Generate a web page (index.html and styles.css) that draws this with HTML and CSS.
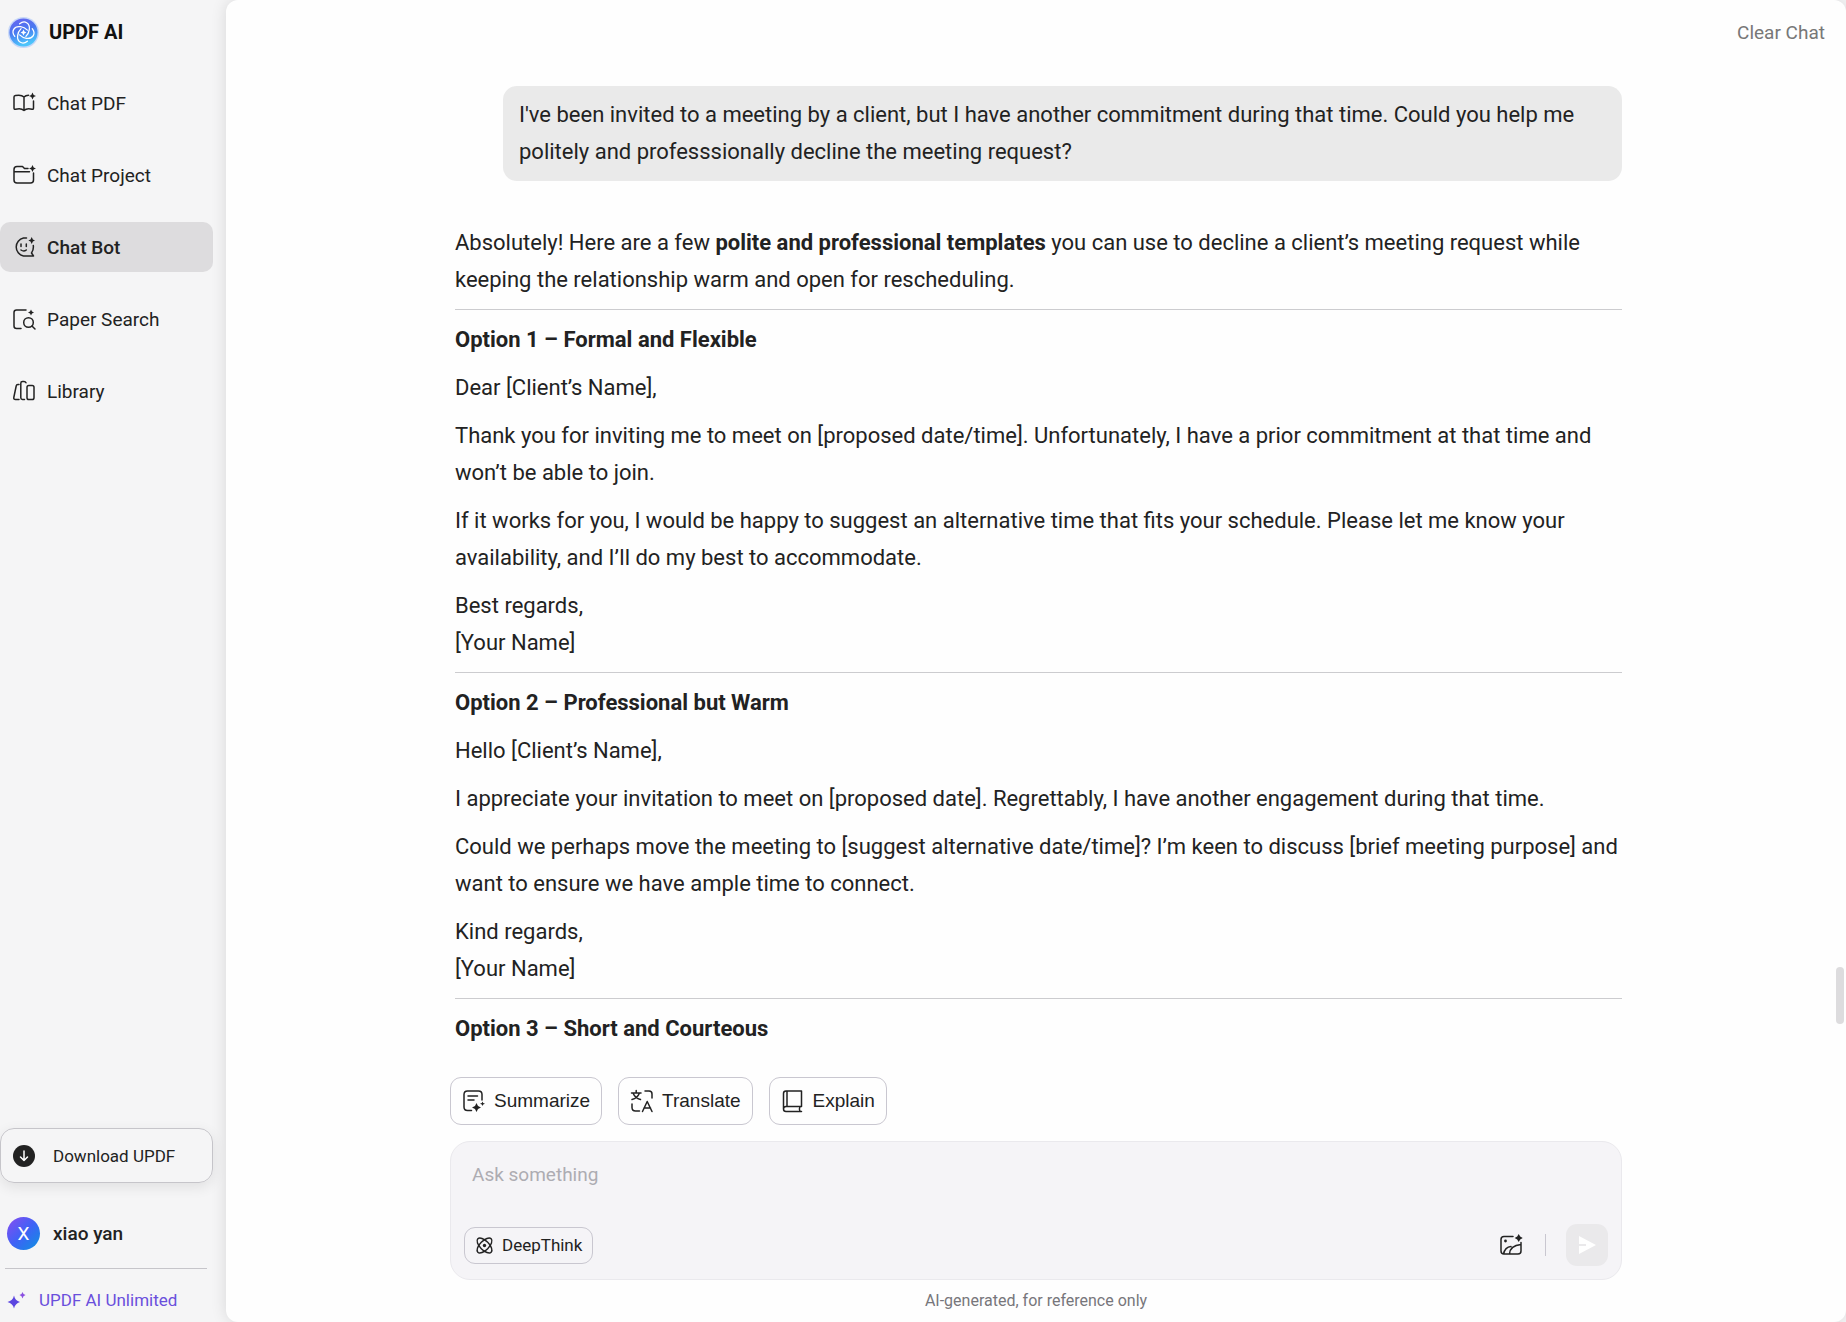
FILE: index.html
```html
<!DOCTYPE html>
<html lang="en">
<head>
    <meta charset="UTF-8">
    <meta name="viewport" content="width=device-width, initial-scale=1.0">
    <title>UPDF AI</title>
    <link rel="stylesheet" href="styles.css">
</head>
<body>
    <div class="app">
        <aside class="sidebar">
            <div class="brand">
                <svg class="brand-logo" viewBox="0 0 32 32" fill="none">
                    <defs>
                        <linearGradient id="logoFill" x1="0" y1="0" x2="0.3" y2="1">
                            <stop offset="0" stop-color="#6a63f0"/>
                            <stop offset="0.5" stop-color="#4a78f0"/>
                            <stop offset="1" stop-color="#4cc4fb"/>
                        </linearGradient>
                    </defs>
                    <circle cx="16" cy="16" r="16" fill="#8fb4fa" opacity="0.45"/>
                    <circle cx="16" cy="16" r="14.5" fill="url(#logoFill)"/>
                    <g stroke="#fff" stroke-width="1.3" stroke-linecap="round">
                        <path d="M12 7C17 3 23 6 22 13Q21.500 17 18.500 20"/>
                        <path d="M12 7C17 3 23 6 22 13Q21.500 17 18.500 20" transform="rotate(90 16 16)"/>
                        <path d="M12 7C17 3 23 6 22 13Q21.500 17 18.500 20" transform="rotate(180 16 16)"/>
                        <path d="M12 7C17 3 23 6 22 13Q21.500 17 18.500 20" transform="rotate(270 16 16)"/>
                    </g>
                    <path d="M16 13L17 15L19 16L17 17L16 19L15 17L13 16L15 15Z" fill="#fff"/>
                </svg>
                <span class="brand-name">UPDF AI</span>
            </div>

            <nav class="menu">
                <a href="#" class="menu-item">
                    <svg class="icon" viewBox="0 0 22 22">
                        <path d="M11 5C9 3 5 3 2.500 3.500Q1 3.800 1 5V16Q1 17.500 2.500 17.200C5 16.500 9 16.500 11 18.500C13 16.500 16 16.500 19 17.200Q20.500 17.500 20.500 16V9M11 5V18.500M11 5C12 4 13.500 3.300 15.500 3.200"/>
                        <path class="solid" d="M19.500 0.500L20.700 3L23 4L20.700 5L19.500 7.500L18.300 5L16 4L18.300 3Z"/>
                    </svg>
                    <span>Chat PDF</span>
                </a>
                <a href="#" class="menu-item">
                    <svg class="icon" viewBox="0 0 22 22">
                        <path d="M15 4.500H11.500L9.500 2.500H4Q1 2.500 1 5.500V16Q1 19 4 19H17.500Q20.500 19 20.500 16V9M1 7.800H16.500"/>
                        <path class="solid" d="M19.500 1L20.700 3.500L23 4.500L20.700 5.500L19.500 8L18.300 5.500L16 4.500L18.300 3.500Z"/>
                    </svg>
                    <span>Chat Project</span>
                </a>
                <a href="#" class="menu-item active">
                    <svg class="icon" viewBox="0 0 22 22">
                        <path d="M13.500 2H10.500A9.200 9.200 0 0 0 10.500 20H20.500L18.500 17Q20.800 14 20.300 9.500M8 8V10.500M13.300 8V10.500M8 14Q10.700 16 13.300 14"/>
                        <path class="solid" d="M18.700 1L19.900 3.500L22 4.500L19.900 5.500L18.700 8L17.500 5.500L15.300 4.500L17.500 3.500Z"/>
                    </svg>
                    <span>Chat Bot</span>
                </a>
                <a href="#" class="menu-item">
                    <svg class="icon" viewBox="0 0 22 22">
                        <path d="M13 2H3.500Q1 2 1 4.500V18Q1 20.500 3.500 20.500H8"/>
                        <circle cx="15.500" cy="14.500" r="4.800"/>
                        <path d="M19 18L22 21"/>
                        <path class="solid" d="M18 1.500L19 3.500L21 4.500L19 5.500L18 7.500L17 5.500L15 4.500L17 3.500Z"/>
                    </svg>
                    <span>Paper Search</span>
                </a>
                <a href="#" class="menu-item">
                    <svg class="icon" viewBox="0 0 22 22">
                        <path d="M6 4.500H4.800Q3.500 4.500 3.200 6L0.800 17.500Q0.500 19.500 2.500 19.500H6M13 2.700Q12.500 1.500 11 1.500H9.500Q7.800 1.500 7.800 3.200V17.800Q7.800 19.500 9.500 19.500H11.500"/>
                        <rect x="14" y="5.500" width="7" height="14" rx="1.800"/>
                    </svg>
                    <span>Library</span>
                </a>
            </nav>

            <div class="sidebar-bottom">
                <button type="button" class="download">
                    <svg class="icon" viewBox="0 0 22 22">
                        <circle cx="11" cy="11" r="11" fill="#222" stroke="none"/>
                        <path d="M11 6V15.500M7.500 12L11 15.500L14.500 12" stroke="#fff"/>
                    </svg>
                    <span>Download UPDF</span>
                </button>
                <div class="user">
                    <span class="avatar">X</span>
                    <span>xiao yan</span>
                </div>
                <a href="#" class="plan">
                    <svg class="plan-icon" viewBox="0 0 20 20">
                        <path d="M7 5.500Q8 10.500 13 12Q8 13.500 7 18.500Q6 13.500 0.500 12Q6 10.500 7 5.500Z" fill="#5b45e0"/>
                        <path d="M15.500 2Q16 4.500 18.500 5Q16 5.500 15.500 8.500Q15 5.500 12.500 5Q15 4.500 15.500 2Z" fill="#8a4fe0"/>
                    </svg>
                    <span>UPDF AI Unlimited</span>
                </a>
            </div>
        </aside>

        <main class="main">
            <header class="top-bar">
                <button type="button" class="clear-chat">Clear Chat</button>
            </header>

            <section class="chat column">
                <div class="question">I've been invited to a meeting by a client, but I have another commitment during that time. Could you help me politely and professsionally decline the meeting request?</div>
                <article class="answer">
                    <p>Absolutely! Here are a few <strong>polite and professional templates</strong> you can use to decline a client’s meeting request while keeping the relationship warm and open for rescheduling.</p>
                    <hr>
                    <h3>Option 1 – Formal and Flexible</h3>
                    <p>Dear [Client’s Name],</p>
                    <p>Thank you for inviting me to meet on [proposed date/time]. Unfortunately, I have a prior commitment at that time and won’t be able to join.</p>
                    <p>If it works for you, I would be happy to suggest an alternative time that fits your schedule. Please let me know your availability, and I’ll do my best to accommodate.</p>
                    <p>Best regards,<br>[Your Name]</p>
                    <hr>
                    <h3>Option 2 – Professional but Warm</h3>
                    <p>Hello [Client’s Name],</p>
                    <p>I appreciate your invitation to meet on [proposed date]. Regrettably, I have another engagement during that time.</p>
                    <p>Could we perhaps move the meeting to [suggest alternative date/time]? I’m keen to discuss [brief meeting purpose] and want to ensure we have ample time to connect.</p>
                    <p>Kind regards,<br>[Your Name]</p>
                    <hr>
                    <h3>Option 3 – Short and Courteous</h3>
                </article>
            </section>

            <footer class="composer column">
                <div class="actions">
                    <button type="button" class="action">
                        <svg class="icon" viewBox="0 0 22 22">
                            <path d="M8.500 20.500H4.500Q1 20.500 1 17V4.500Q1 1 4.500 1H15.500Q19 1 19 4.500V10M5 6H14.500M5 10H11"/>
                            <path class="solid" d="M13.500 13L15 16L18 17.500L15 19L13.500 22L12 19L9 17.500L12 16Z"/>
                            <path class="solid" d="M19.500 11.500L20.200 13L22 13.700L20.200 14.400L19.500 16L18.800 14.400L17 13.700L18.800 13Z"/>
                        </svg>
                        <span>Summarize</span>
                    </button>
                    <button type="button" class="action">
                        <svg class="icon" viewBox="0 0 22 22">
                            <path d="M0.500 3H10M5.200 0.500V3M2 3Q4 8 9.500 9.500M8.500 3Q6.500 8 1 9.500M14 1H18Q21 1 21 4V8M1 14V17.500Q1 21 4.500 21H8.500M11.500 21.500L16.200 11.500L21 21.500M13 18H19.500"/>
                        </svg>
                        <span>Translate</span>
                    </button>
                    <button type="button" class="action">
                        <svg class="icon" viewBox="0 0 22 22">
                            <path d="M5 16.500V1H19.500V16.500H4Q1.500 16.500 1.500 19V3.500Q1.500 1 4 1H5M1.500 19Q1.500 21.500 4 21.500H19.500M18 16.500Q16.800 19 18 21.500"/>
                        </svg>
                        <span>Explain</span>
                    </button>
                </div>

                <form class="prompt">
                    <textarea class="prompt-text" aria-label="Message" placeholder="Ask something" rows="1"></textarea>
                    <div class="prompt-bar">
                        <button type="button" class="deep-think">
                            <svg class="atom" viewBox="0 0 18 18">
                                <ellipse cx="9" cy="9" rx="10" ry="4.800" transform="rotate(45 9 9)"/>
                                <ellipse cx="9" cy="9" rx="10" ry="4.800" transform="rotate(-45 9 9)"/>
                                <circle class="solid" cx="9" cy="9" r="1.800"/>
                            </svg>
                            <span>DeepThink</span>
                        </button>
                        <div class="prompt-tools">
                            <button type="button" class="image-button" aria-label="Add image">
                                <svg class="icon" viewBox="0 0 22 22">
                                    <path d="M13 2.500H4Q1 2.500 1 5.500V17Q1 20 4 20H18Q21 20 21 17V8.500M3.500 20Q5 13 11 12.500M9.500 20Q10 11.500 21 10.500"/>
                                    <circle class="solid" cx="5.500" cy="7" r="1.400"/>
                                    <path class="solid" d="M18.700 0L20.200 2.500L22.700 4L20.200 5.500L18.700 8L17.200 5.500L14.700 4L17.200 2.500Z"/>
                                </svg>
                            </button>
                            <span class="divider"></span>
                            <button type="submit" class="send" aria-label="Send">
                                <svg viewBox="0 0 20 20"><path d="M2 1L19 10L2 19V11H9V9H2Z"/></svg>
                            </button>
                        </div>
                    </div>
                </form>
                <p class="note">AI-generated, for reference only</p>
            </footer>
            <div class="scroll-thumb"></div>
        </main>
    </div>
</body>
</html>
```
FILE: styles.css
```css
* {
    margin: 0;
    padding: 0;
    box-sizing: border-box;
}

body {
    background: #f5f5f6;
    color: #222;
    font-family: Roboto, "Liberation Sans", sans-serif;
    font-size: 22px;
}

button,
textarea {
    border: none;
    background: none;
    color: inherit;
    font: inherit;
}

button {
    cursor: pointer;
}

a {
    color: inherit;
    text-decoration: none;
}

svg {
    display: block;
    flex: none;
    overflow: visible;
}

.app {
    display: flex;
    height: 100vh;
}

/* sidebar */
.sidebar {
    display: flex;
    flex-direction: column;
    width: 226px;
    flex: none;
}

.brand {
    display: flex;
    align-items: center;
    gap: 10px;
    height: 64px;
    padding-left: 8px;
}

.brand-logo {
    width: 31px;
    height: 31px;
}

.brand-name {
    color: #111;
    font-size: 20px;
    font-weight: 700;
}

.icon {
    width: 22px;
    height: 22px;
    fill: none;
    stroke: #222;
    stroke-width: 1.5;
    stroke-linecap: round;
    stroke-linejoin: round;
}

.solid {
    fill: #222;
    stroke: none;
}

.menu {
    display: flex;
    flex-direction: column;
    gap: 22px;
    margin: 14px 13px 0 0;
    font-size: 19px;
}

.menu-item {
    display: flex;
    align-items: center;
    gap: 12px;
    height: 50px;
    padding-left: 13px;
    border-radius: 10px;
}

.menu-item.active {
    background: #dddcde;
    font-weight: 500;
}

.sidebar-bottom {
    margin-top: auto;
}

.download {
    display: flex;
    align-items: center;
    gap: 18px;
    width: calc(100% - 13px);
    height: 55px;
    padding-left: 12px;
    border: 1px solid #c6c5ca;
    border-radius: 14px;
    box-shadow: 0 4px 14px rgba(0, 0, 0, 0.09);
    font-size: 17px;
}

.user {
    display: flex;
    align-items: center;
    gap: 13px;
    height: 86px;
    margin: 0 19px 0 5px;
    padding: 16px 0 0 2px;
    border-bottom: 1px solid #c6c5ca;
    font-size: 19px;
    font-weight: 500;
}

.avatar {
    display: flex;
    align-items: center;
    justify-content: center;
    width: 33px;
    height: 33px;
    border-radius: 50%;
    background: linear-gradient(135deg, #8a4cf0, #3f62f6 50%, #0c92e0);
    color: #fff;
    font-weight: 400;
}

.plan {
    display: flex;
    align-items: center;
    gap: 12px;
    height: 53px;
    padding: 8px 0 0 7px;
    color: #6a4fdc;
    font-size: 17px;
}

.plan-icon {
    width: 20px;
    height: 20px;
}

/* chat */
.main {
    position: relative;
    display: flex;
    flex-direction: column;
    flex: 1;
    min-width: 0;
    background: #fefefe;
    border-radius: 12px;
    box-shadow: 0 0 16px rgba(0, 0, 0, 0.12);
}

.column {
    width: calc(100% - 48px);
    max-width: 1172px;
    margin: 0 auto;
}

.top-bar {
    display: flex;
    justify-content: flex-end;
    align-items: center;
    height: 64px;
    padding-right: 21px;
    flex: none;
}

.clear-chat {
    color: #777;
    font-size: 19px;
}

.chat {
    flex: 1;
    min-height: 0;
    overflow: hidden;
    padding: 22px 0 0 5px;
    line-height: 37px;
}

.question {
    margin-left: 48px;
    padding: 10px 16px 11px;
    border-radius: 14px;
    background: #eaeaea;
}

.answer {
    display: flex;
    flex-direction: column;
    gap: 11px;
    margin-top: 43px;
}

.answer hr {
    border: none;
    border-top: 1px solid #cccccf;
}

.answer h3 {
    font-size: inherit;
    font-weight: 700;
}

.composer {
    flex: none;
}

.actions {
    display: flex;
    gap: 16px;
    padding-top: 10px;
    margin-bottom: 16px;
    font-family: "Liberation Sans", Arial, sans-serif;
    font-size: 19px;
}

.action {
    display: flex;
    align-items: center;
    gap: 9px;
    height: 48px;
    padding: 0 11px 0 12px;
    border: 1px solid #c9c7d0;
    border-radius: 11px;
}

.prompt {
    display: flex;
    flex-direction: column;
    justify-content: space-between;
    height: 139px;
    padding: 19px 13px 13px;
    border: 1px solid #eae9ed;
    border-radius: 20px;
    background: #f5f4f7;
}

.prompt-text {
    width: 100%;
    height: 28px;
    padding-left: 8px;
    font-size: 19px;
    line-height: 28px;
    resize: none;
    outline: none;
}

.prompt-text::placeholder {
    color: #adacb2;
}

.prompt-bar {
    display: flex;
    align-items: center;
    justify-content: space-between;
}

.deep-think {
    display: flex;
    align-items: center;
    gap: 9px;
    height: 37px;
    padding: 0 10px 0 11px;
    border: 1px solid #c9c7d0;
    border-radius: 11px;
    font-size: 17px;
}

.atom {
    width: 17px;
    height: 17px;
    fill: none;
    stroke: #222;
    stroke-width: 1.5;
}

.prompt-tools {
    display: flex;
    align-items: center;
}

.divider {
    width: 1px;
    height: 22px;
    margin: 0 20px 0 23px;
    background: #c9c7d0;
}

.send {
    display: flex;
    align-items: center;
    justify-content: center;
    width: 42px;
    height: 42px;
    border-radius: 11px;
    background: #eae9eb;
}

.send svg {
    width: 20px;
    height: 20px;
    fill: #fff;
}

.note {
    height: 42px;
    color: #77767b;
    font-size: 16px;
    line-height: 42px;
    text-align: center;
}

.scroll-thumb {
    position: absolute;
    right: 2px;
    top: 967px;
    width: 8px;
    height: 57px;
    border-radius: 4px;
    background: #dddcde;
}
```
